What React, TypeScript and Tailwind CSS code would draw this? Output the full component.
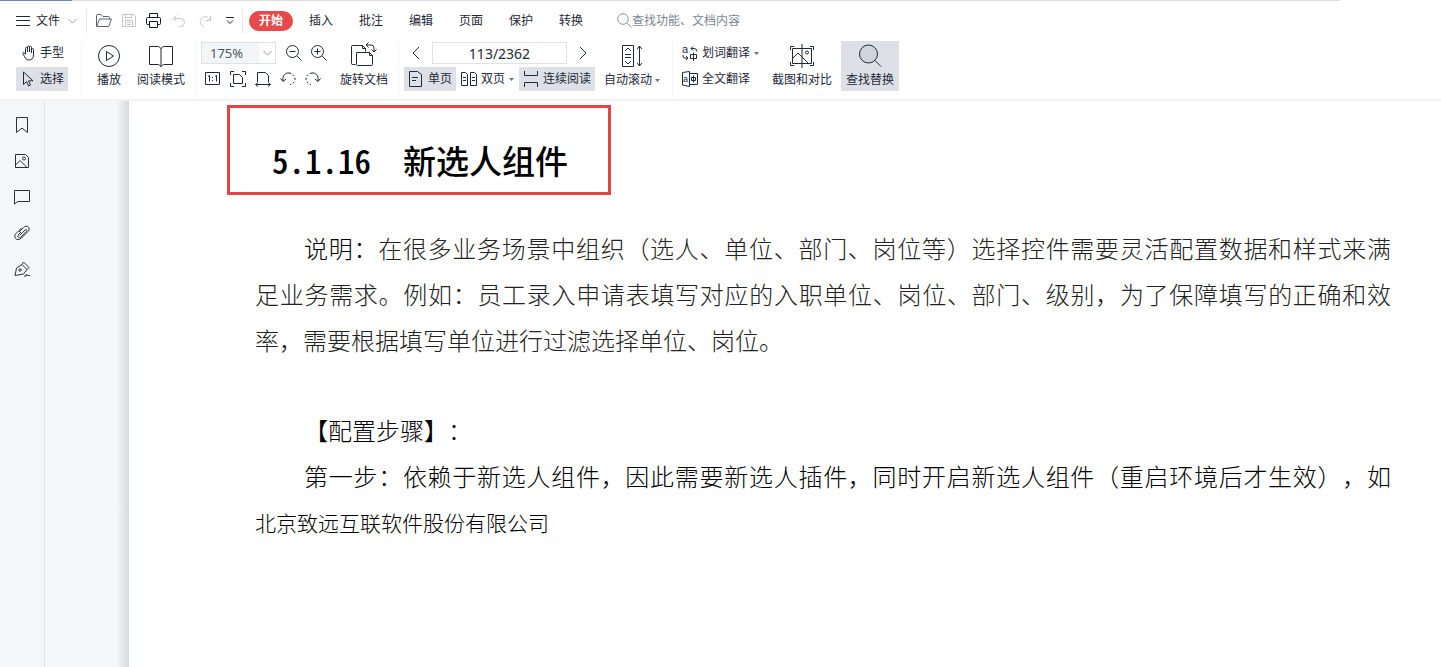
import type { ReactNode } from "react";

type IconProps = { w: number; h: number; children: ReactNode; className?: string };

function Icon({ w, h, children, className = "" }: IconProps) {
  return (
    <svg
      width={w}
      height={h}
      viewBox={`0 0 ${w} ${h}`}
      fill="none"
      stroke="currentColor"
      strokeWidth="1"
      className={`shrink-0 ${className}`}
      aria-hidden="true"
    >
      {children}
    </svg>
  );
}

function Caret() {
  return (
    <Icon w={5} h={3} className="text-[#6b7280]">
      <path d="M0 0h5L2.5 3z" fill="currentColor" stroke="none" />
    </Icon>
  );
}

function Divider() {
  return <div className="h-14 w-px shrink-0 bg-[#f3f4f6]" />;
}

const tabs = ["插入", "批注", "编辑", "页面", "保护", "转换"];

function MenuBar() {
  return (
    <div className="flex h-[39px] items-center pl-4">
      <button className="flex w-[70px] items-center">
        <Icon w={14} h={10}>
          <path d="M0 .5h14M0 4.5h14M0 9.5h14" />
        </Icon>
        <span className="ml-[6px] mr-2">文件</span>
        <Icon w={9} h={6} className="text-[#9aa0aa]">
          <path d="M.5 1l4 4 4-4" />
        </Icon>
      </button>
      <div className="h-6 w-px bg-[#e5e7eb]" />
      <div className="ml-[9px] flex w-[146px] items-center">
        <button aria-label="打开" className="mr-[10px]">
          <Icon w={16} h={13} className="text-[#5c626d]">
            <path d="M.5 12V1.500a1 1 0 0 1 1-1h3.500l2 2h5.500a1 1 0 0 1 1 1V5M.7 12.500L3.500 5h12l-2.800 7.500z" />
          </Icon>
        </button>
        <button aria-label="保存" className="mr-[10px]">
          <Icon w={14} h={13} className="text-[#c3c6cb]">
            <path d="M.5.5h11l2 2v10H.5zM3.500.5v3h6v-3M3.500 12.500v-6h7v6M5 8.500h4M5 10.500h4" />
          </Icon>
        </button>
        <button aria-label="打印" className="mr-3">
          <Icon w={15} h={15} className="text-[#111827]">
            <path d="M3.500 4.500v-4h8v4M3.500 11.500h-2a1 1 0 0 1-1-1v-5a1 1 0 0 1 1-1h12a1 1 0 0 1 1 1v5a1 1 0 0 1-1 1h-2M3.500 8.500h8v6h-8z" />
          </Icon>
        </button>
        <button aria-label="撤销" className="mr-[14px]">
          <Icon w={12} h={12} className="text-[#c3c6cb]">
            <path d="M3.500.500L.7 3.500l3 3M1 3.500h6.500a4 4 0 0 1 0 8H6" />
          </Icon>
        </button>
        <button aria-label="恢复" className="mr-[15px]">
          <Icon w={12} h={12} className="text-[#c3c6cb]">
            <path d="M11.500 1v4.500H7M11 5A5 5 0 1 0 5 11.500" />
          </Icon>
        </button>
        <button aria-label="更多">
          <Icon w={8} h={7}>
            <path d="M0 .5h8M1 3.500l3 3 3-3" />
          </Icon>
        </button>
      </div>
      <div className="h-6 w-px bg-[#e5e7eb]" />
      <button className="ml-[6px] h-5 w-11 rounded-full bg-[#e8494b] font-bold text-white">开始</button>
      <nav className="ml-4 flex gap-[26px]">
        {tabs.map((tab) => (
          <button key={tab}>{tab}</button>
        ))}
      </nav>
      <label className="ml-[34px] flex flex-1 items-center text-[#7d8592]">
        <Icon w={15} h={15} className="text-[#8b93a1]">
          <circle cx="6" cy="6" r="5.300" />
          <path d="M10 10l4.500 4.500" />
        </Icon>
        <input
          aria-label="查找"
          placeholder="查找功能、文档内容"
          className="w-40 outline-none placeholder:text-[#7d8592]"
        />
      </label>
    </div>
  );
}

function Toolbar() {
  return (
    <div className="flex h-[59px] items-start pl-4 pt-px">
      <div className="flex w-[65px] flex-col items-start gap-[2px]">
        <button className="flex h-6 items-center gap-1 pl-[6px]">
          <Icon w={14} h={16}>
            <path d="M3.500 9V3.500a1 1 0 0 1 2 0V7V2a1 1 0 0 1 2 0V7V2.500a1 1 0 0 1 2 0V8V4.500a1 1 0 0 1 2 0V10c0 3.500-2 5-4.500 5C4.500 15 3.500 13.500 2.500 11.500L.8 8.500C.5 7.500 1.800 7 2.500 8l1 1.500" />
          </Icon>
          手型
        </button>
        <button className="flex h-6 w-[52px] items-center gap-[5px] bg-[#dde1e7] pl-[6px]">
          <Icon w={13} h={16}>
            <path d="M1.500 1v12.500l3-3 2 4.500 2-1-2-4.200h4.500z" />
          </Icon>
          选择
        </button>
      </div>
      <Divider />
      <button className="ml-[15px] flex w-6 flex-col items-center">
        <Icon w={24} h={30}>
          <circle cx="12" cy="15" r="10.500" />
          <path d="M9.500 10.500v9l7-4.500z" />
        </Icon>
        <span>播放</span>
      </button>
      <button className="ml-4 flex w-12 flex-col items-center">
        <Icon w={24} h={30}>
          <path d="M.5 5.500h9l2.500 2 2.500-2h9v18h-9l-2.500 2-2.500-2h-9zM12 7.500v18" />
        </Icon>
        <span>阅读模式</span>
      </button>
      <div className="w-[10px]" />
      <Divider />
      <div className="ml-[5px] flex flex-col gap-[2px]">
        <div className="flex h-6 items-center">
          <div className="relative mr-[10px]">
            <select
              aria-label="缩放"
              defaultValue="175%"
              className="h-[22px] w-[75px] appearance-none border border-[#dfe2e6] bg-[#f3f6f9] pl-2 font-['Noto_Sans'] text-[13px] leading-5 text-[#4b5563]"
            >
              <option>100%</option>
              <option>175%</option>
            </select>
            <span className="pointer-events-none absolute right-px top-px flex h-5 w-4 items-center justify-center bg-white">
              <Icon w={9} h={6} className="text-[#8b93a1]">
                <path d="M.5 1l4 4 4-4" />
              </Icon>
            </span>
          </div>
          <button aria-label="缩小" className="mr-[9px]">
            <Icon w={16} h={16}>
              <circle cx="6.500" cy="6.500" r="6" />
              <path d="M11 11l4.500 4.500M3.500 6.500h6" />
            </Icon>
          </button>
          <button aria-label="放大">
            <Icon w={16} h={16}>
              <circle cx="6.500" cy="6.500" r="6" />
              <path d="M11 11l4.500 4.500M3.500 6.500h6M6.500 3.500v6" />
            </Icon>
          </button>
        </div>
        <div className="flex h-6 items-center gap-[9px] pl-1">
          <button aria-label="实际大小">
            <Icon w={16} h={16}>
              <path d="M.5 1.500h14v12H.5zM3 5.500l1.500-1v6M10 5.500l1.500-1v6M7 6.500h1M7 9.500h1" />
            </Icon>
          </button>
          <button aria-label="适合页面">
            <Icon w={16} h={16}>
              <path d="M.5 4V.5H4M12 .5h3.500V4M.5 12v3.500H4M12 15.500h3.500V12M3.500 3.500h6l3 3v6h-9z" />
            </Icon>
          </button>
          <button aria-label="适合宽度">
            <Icon w={16} h={16}>
              <path d="M2.500 11V1.500h8l3 3V11M.5 13.500h15M3 11.500l-2.500 2 2.500 2M13 11.500l2.500 2-2.500 2" />
            </Icon>
          </button>
          <button aria-label="向左旋转">
            <Icon w={16} h={16}>
              <path d="M3 10C2 4 6 1.500 9 2M.500 7.500L3 10.500l3-2.500" />
              <path d="M9 2c4 .5 6 3 6 6s-2 5-5 5.500" strokeDasharray="2 2" />
            </Icon>
          </button>
          <button aria-label="向右旋转">
            <Icon w={16} h={16}>
              <path d="M13 10C14 4 10 1.500 7 2M15.500 7.500L13 10.500l-3-2.500" />
              <path d="M7 2C3 2.500 1 5 1 8s2 5 5 5.500" strokeDasharray="2 2" />
            </Icon>
          </button>
        </div>
      </div>
      <button className="ml-[9px] flex w-14 flex-col items-center">
        <Icon w={26} h={30}>
          <path d="M4.500 23.500h-3a1 1 0 0 1-1-1v-17a1 1 0 0 1 1-1h10l3 3v3M11.500 4.500v3h3" />
          <path d="M5.500 11.500h13l3 3v9a1 1 0 0 1-1 1h-14a1 1 0 0 1-1-1zM18.500 11.500v3h3" />
          <path d="M15 4h5a3 3 0 0 1 3 3v4M17.500 1.500L15 4l2.500 2.500M20.500 8.500L23 11l2.500-2.500" />
        </Icon>
        <span>旋转文档</span>
      </button>
      <div className="w-[6px]" />
      <Divider />
      <div className="ml-[5px] flex flex-col gap-[2px]">
        <div className="flex h-6 items-center">
          <button aria-label="上一页" className="flex w-7 justify-center pr-1">
            <Icon w={8} h={14}>
              <path d="M7 1L1 7l6 6" />
            </Icon>
          </button>
          <input
            aria-label="页码"
            defaultValue="113/2362"
            className="h-[22px] w-[135px] border border-[#dfe2e6] text-center font-['Noto_Sans'] text-[14px]"
          />
          <button aria-label="下一页" className="flex w-8 justify-center">
            <Icon w={8} h={14}>
              <path d="M1 1l6 6-6 6" />
            </Icon>
          </button>
        </div>
        <div className="flex h-6 items-center gap-[3px]">
          <button className="flex h-6 w-[52px] items-center gap-[6px] bg-[#dde1e7] pl-[5px]">
            <Icon w={13} h={16}>
              <path d="M.5.5h8l4 3v12H.5zM3 6.500h6M3 9.500h4" />
            </Icon>
            单页
          </button>
          <button className="flex h-6 w-[57px] items-center gap-1 pl-[2px]">
            <Icon w={16} h={16}>
              <path d="M.5 1.500h4l2 2v11h-6zM9.500 1.500h4l2 2v11h-6zM2 6.500h3M2 9.500h3M11 6.500h3M11 9.500h3" />
            </Icon>
            双页
            <Caret />
          </button>
          <button className="flex h-6 w-[76px] items-center gap-1 bg-[#dde1e7] pl-1">
            <Icon w={16} h={16}>
              <path d="M1.500 0v4.500h13V0M1.500 16v-4.500h13V16" />
            </Icon>
            连续阅读
          </button>
        </div>
      </div>
      <button className="ml-[5px] flex w-14 flex-col items-center">
        <Icon w={22} h={30}>
          <path d="M1.500 4.500h11v21h-11zM4 10l3-3 3 3M4 13.500h6M4 16.500h6M4 20l3 3 3-3M18.500 5v20M16 8l2.500-3L21 8M16 22l2.500 3 2.500-3" />
        </Icon>
        <span className="flex items-center gap-[3px]">
          自动滚动
          <Caret />
        </span>
      </button>
      <div className="w-3" />
      <Divider />
      <div className="ml-[9px] flex flex-col gap-[2px]">
        <button className="flex h-6 items-center gap-1">
          <Icon w={16} h={18}>
            <text x="0" y="9" fontSize="11" fill="currentColor" stroke="none">a</text>
            <path d="M9 4.500h3a3 3 0 0 1 3 3M11 2.500l-2 2 2 2M1 11v1a2 2 0 0 0 2 2h3M4 12l2 2-2 2M8.500 10.500h6v4h-6zM11.500 8.500v8.500" />
          </Icon>
          划词翻译
          <Caret />
        </button>
        <button className="flex h-6 items-center gap-1">
          <Icon w={16} h={16}>
            <path d="M.5 1.500L7.500.5v15l-7-1.500zM7.500 2.500h8v11h-8M9.500 6.500h4v3h-4zM11.500 4.500v7" />
            <text x="1" y="11" fontSize="9" fill="currentColor" stroke="none">a</text>
          </Icon>
          全文翻译
        </button>
      </div>
      <button className="ml-[13px] flex w-[60px] flex-col items-center">
        <Icon w={24} h={30}>
          <path d="M.5 9V5.500H4M20 5.500h3.500V9M.5 21v3.500H4M20 24.500h3.500V21M12 3v24" />
          <path d="M2.500 7.500h19v15h-19zM3 17l5-5 10 10M8 12l4 4" />
          <circle cx="17" cy="11.500" r="1.500" />
        </Icon>
        <span>截图和对比</span>
      </button>
      <button className="ml-[9px] flex h-[50px] w-[58px] flex-col items-center bg-[#dde1e7]">
        <Icon w={24} h={30}>
          <circle cx="10.500" cy="13" r="9" fill="#cfd5dd" />
          <path d="M17 19.500l6 6" />
        </Icon>
        <span>查找替换</span>
      </button>
    </div>
  );
}

function Sidebar() {
  return (
    <aside className="flex w-[45px] flex-col items-center border-r border-[#dde2e8] bg-[#f3f7fa] pt-[6px] text-[#2b2f3a]">
      <button aria-label="书签" className="flex h-9 items-center">
        <Icon w={12} h={16}>
          <path d="M.5.500h11v15L6 11 .5 15.500z" />
        </Icon>
      </button>
      <button aria-label="缩略图" className="flex h-9 items-center">
        <Icon w={16} h={16}>
          <path d="M1.500 1.500h10l3 3v10h-13zM1.500 12l4.500-4.500 7 7" />
          <circle cx="10" cy="5.500" r="1.500" />
        </Icon>
      </button>
      <button aria-label="批注" className="flex h-9 items-center">
        <Icon w={16} h={16}>
          <path d="M.5 1.500h15v11H4L.5 15z" />
        </Icon>
      </button>
      <button aria-label="附件" className="flex h-9 items-center">
        <Icon w={16} h={16}>
          <path d="M5 7l4.500-4.500c2-2 5-1.500 5.500.5.500 1.500 0 2.500-1 3.500l-6.500 6.500c-2 2-5 2-6 .5S.5 10 2 8.500L7.500 3M5.500 10.500L11 5c1-1 2.500 0 1.500 1.300L7 12c-1.500 1.500-4 .5-2.500-2.500L7 7" />
        </Icon>
      </button>
      <button aria-label="签名" className="flex h-9 items-center">
        <Icon w={16} h={16}>
          <path d="M1 14.500L2.500 7 8 3.500l5 5L9.500 13zM8 3.500l1.500-2.500 5.500 5.500-2 2M10 15h2.500c-1-2 1-2 1.500-.5h2" />
          <circle cx="6" cy="9" r="1.200" />
        </Icon>
      </button>
    </aside>
  );
}

function DocumentPage() {
  return (
    <main className="flex-1 bg-white pb-10 pl-[98px] pr-[50px] pt-1 text-[24px] font-light leading-[46px] text-[#222] [text-spacing-trim:space-all]">
      <h1 className="flex h-[90px] w-[384px] items-center gap-8 border-3 border-[#e34447] pl-[42px] pt-5 font-['Noto_Sans_CJK_SC',sans-serif] text-[33px] font-medium text-black">
        <span className="[font-feature-settings:'hwid']">5.1.16</span>
        <span>新选人组件</span>
      </h1>
      <section className="mt-8 pl-7">
        <p>
          <span className="block pl-[49px] [text-align-last:justify]">
            <span className="text-black">说明：</span>
            在很多业务场景中组织（选人、单位、部门、岗位等）选择控件需要灵活配置数据和样式来满
          </span>
          <span className="block [text-align-last:justify]">
            足业务需求。例如：员工录入申请表填写对应的入职单位、岗位、部门、级别，为了保障填写的正确和效
          </span>
          <span className="block">率，需要根据填写单位进行过滤选择单位、岗位。</span>
        </p>
        <h2 className="mt-11 pl-[49px] text-black">【配置步骤】：</h2>
        <p className="pl-[49px] text-black [text-align-last:justify]">
          第一步：依赖于新选人组件，因此需要新选人插件，同时开启新选人组件（重启环境后才生效），如
        </p>
        <p className="text-[21px] text-black">北京致远互联软件股份有限公司</p>
      </section>
    </main>
  );
}

export default function App() {
  return (
    <div className="flex min-h-screen flex-col bg-white font-['Liberation_Sans','Noto_Sans_CJK_SC',sans-serif] text-[12px] leading-[18px] text-[#1f2937]">
      <header className="border-b-2 border-[#f3f3f4]">
        <div className="flex h-px">
          <div className="w-[72px] bg-[#6d86c4]" />
          <div className="flex-1 bg-[#dcdcdf]" />
          <div className="w-[101px]" />
        </div>
        <MenuBar />
        <Toolbar />
      </header>
      <div className="flex flex-1">
        <Sidebar />
        <div className="w-[84px] shrink-0 bg-linear-to-r from-[#f3f7fa] from-85% to-[#d5dadf]" />
        <DocumentPage />
      </div>
    </div>
  );
}
